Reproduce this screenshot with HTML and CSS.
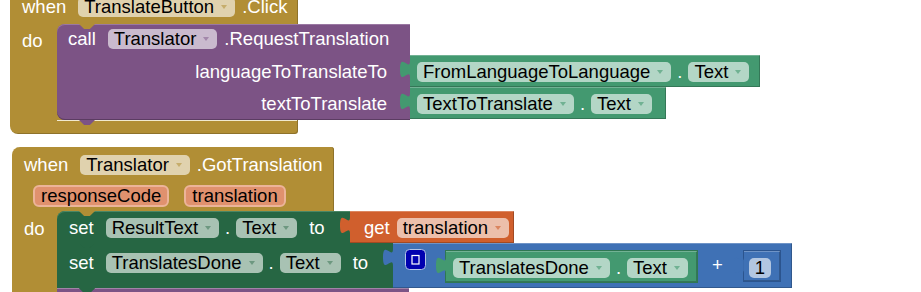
FILE: index.html
```html
<!DOCTYPE html>
<html lang="en">
<head>
    <meta charset="UTF-8">
    <title>Blocks</title>
    <link rel="stylesheet" href="styles.css">
</head>
<body>
    <div class="canvas">
        <!-- when TranslateButton.Click -->
        <div class="event ev1">
            <div class="ev-head">
                <div class="row">
                    <span class="label">when</span>
                    <span class="field dd">TranslateButton</span>
                    <span class="label method">.Click</span>
                </div>
            </div>
            <div class="ev-mid">
                <div class="ev-col"><span class="label">do</span></div>
                <div class="ev-stack">
                    <div class="stmt call">
                        <div class="line l1">
                            <div class="body">
                                <span class="label">call</span>
                                <span class="field dd">Translator</span>
                                <span class="label method">.RequestTranslation</span>
                            </div>
                        </div>
                        <div class="line l2">
                            <div class="body arg"><span class="label">languageToTranslateTo</span></div>
                            <div class="value getter g1">
                                <span class="field dd">FromLanguageToLanguage</span>
                                <span class="label dot">.</span>
                                <span class="field dd">Text</span>
                            </div>
                        </div>
                        <div class="line l3">
                            <div class="body arg"><span class="label">textToTranslate</span></div>
                            <div class="value getter g2">
                                <span class="field dd">TextToTranslate</span>
                                <span class="label dot">.</span>
                                <span class="field dd">Text</span>
                            </div>
                        </div>
                    </div>
                </div>
            </div>
            <div class="ev-foot"></div>
        </div>

        <!-- when Translator.GotTranslation -->
        <div class="event ev2">
            <div class="ev-head">
                <div class="row">
                    <span class="label">when</span>
                    <span class="field dd">Translator</span>
                    <span class="label method">.GotTranslation</span>
                </div>
                <div class="row params">
                    <span class="param">responseCode</span>
                    <span class="param">translation</span>
                </div>
            </div>
            <div class="ev-mid">
                <div class="ev-col"><span class="label">do</span></div>
                <div class="ev-stack">
                    <div class="stmt set s1">
                        <div class="line">
                            <div class="body">
                                <span class="label">set</span>
                                <span class="field dd">ResultText</span>
                                <span class="label dot">.</span>
                                <span class="field dd">Text</span>
                                <span class="label">to</span>
                            </div>
                            <div class="value var">
                                <span class="label get">get</span>
                                <span class="field dd">translation</span>
                            </div>
                        </div>
                    </div>
                    <div class="stmt set s2">
                        <div class="line">
                            <div class="body">
                                <span class="label">set</span>
                                <span class="field dd">TranslatesDone</span>
                                <span class="label dot">.</span>
                                <span class="field dd">Text</span>
                                <span class="label">to</span>
                            </div>
                            <div class="value math">
                                <svg class="mutator" width="21" height="21" viewBox="0 0 21 21">
                                    <rect x="0.5" y="0.5" width="20" height="20" rx="4" fill="#0000b0" stroke="#b3c4e8"/>
                                    <rect x="7" y="6.5" width="7" height="8.5" fill="none" stroke="#fff" stroke-width="1.2"/>
                                </svg>
                                <div class="value getter inner">
                                    <span class="field dd">TranslatesDone</span>
                                    <span class="label dot">.</span>
                                    <span class="field dd">Text</span>
                                </div>
                                <span class="label plus">+</span>
                                <div class="value number">
                                    <span class="field">1</span>
                                </div>
                            </div>
                        </div>
                    </div>
                    <div class="stmt call s3">
                        <div class="line">
                            <div class="body"></div>
                        </div>
                    </div>
                </div>
            </div>
        </div>
    </div>
</body>
</html>
```

FILE: styles.css
```css
html,body{
    margin:0px;
    padding:0px;
}
body{
    background:#fff;
    font-family:"Liberation Sans", Arial, sans-serif;
    font-size:18.5px;
}
.canvas{
    position:relative;
    width:921px;
    height:292px;
    overflow:hidden;
}

/* event blocks sit on the free canvas */
.event{
    position:absolute;
    display:flex;
    flex-direction:column;
    --gold:#b18e35;
}
.ev1{
    left:10px;
    top:-11px;
}
.ev2{
    left:12px;
    top:147px;
}
.ev-head{
    background:var(--gold);
    border-radius:8px 3px 0 0;
    box-shadow:inset -1px 0 0 #8e722a;
    --arrow:rgba(177,142,53,.55);
}
.ev1 .ev-head{ width:288px; }
.ev2 .ev-head{ width:322px; }
.row{
    display:flex;
    align-items:flex-start;
    gap:12px;
    height:34px;
    padding:8px 0 0 12px;
    box-sizing:border-box;
}
.ev1 .row{ height:35px; }
.row.params{
    height:30px;
    padding:4px 0 0 21px;
    gap:15px;
}
.ev-mid{
    display:flex;
}
.ev-col{
    background:var(--gold);
    box-sizing:border-box;
    padding:6px 0 0 12px;
}
.ev1 .ev-col{ width:47px; }
.ev2 .ev-col{ width:45px; padding-top:7px; }
.ev-stack{
    display:flex;
    flex-direction:column;
    background:linear-gradient(to right, var(--gold) 10px, transparent 10px);
}
.ev-foot{
    width:288px;
    height:14px;
    border-radius:0 0 3px 8px;
    background:linear-gradient(#f1e9cf, #f1e9cf) 47px 0 / 100% 1px no-repeat, var(--gold);
    box-shadow:inset -1px -1px 0 #8e722a;
}

/* text bits */
.label{
    color:#fff;
    line-height:20px;
    white-space:nowrap;
}
.method{ margin-left:-5px; }
.dot{ margin:0 -6px; }
.get{ margin-right:-5px; }
.field{
    display:inline-flex;
    align-items:center;
    height:20px;
    padding:0 6px;
    border-radius:5px;
    background:rgba(255,255,255,.6);
    color:#000;
    line-height:20px;
    white-space:nowrap;
}
.field.dd{
    padding-right:8px;
}
.field.dd::after{
    content:'';
    margin-left:7px;
    border-left:3px solid transparent;
    border-right:3px solid transparent;
    border-top:4px solid var(--arrow);
}
.param{
    box-sizing:border-box;
    height:22px;
    padding:0 6px;
    border:2px solid rgb(236,180,153);
    border-radius:6px;
    background:rgb(224,145,110);
    color:#000;
    line-height:18px;
    white-space:nowrap;
}

/* statement blocks */
.stmt{
    position:relative;
    display:flex;
    flex-direction:column;
}
.stmt::before,
.stmt::after{
    content:'';
    position:absolute;
    left:22px;
    width:16px;
    height:5px;
    z-index:2;
    clip-path:polygon(0 0, 100% 0, 68% 100%, 32% 100%);
}
.stmt::before{
    top:0;
    background:var(--up);
}
.stmt::after{
    top:100%;
    background:var(--c);
}
.call{
    --c:#7c5385;
    --arrow:rgba(124,83,133,.5);
    --up:#b18e35;
}
.set{
    --c:#266643;
    --arrow:rgba(38,102,67,.45);
    --up:#b18e35;
}
.s2,.s3{ --up:#266643; }
.line{
    display:flex;
}
.body{
    box-sizing:border-box;
    display:flex;
    align-items:flex-start;
    gap:12px;
    background:var(--c);
}
.call .body{
    width:353px;
    padding-left:11px;
}
.call .l1 .body{
    height:31px;
    padding-top:5px;
    border-top-left-radius:8px;
    box-shadow:inset 0 1px 0 #9a78a2;
}
.call .l2 .body{
    height:32px;
    padding-top:7px;
}
.call .l3 .body{
    height:33px;
    padding-top:7px;
    border-bottom-left-radius:8px;
    box-shadow:inset 0 -1px 0 #5b3c62;
}
.body.arg{
    justify-content:flex-end;
    padding-right:23px;
}
.s1 .body{
    width:293px;
    height:32px;
    padding:7px 0 0 12px;
    border-top-left-radius:8px;
    box-shadow:inset 0 1px 0 #4a8765;
}
.s2 .body{
    width:336px;
    height:45px;
    padding:10px 0 0 12px;
}
.s3 .body{
    width:352px;
    height:32px;
    box-shadow:inset 0 1px 0 #a184a8;
}

/* value blocks plug in from the right */
.value{
    position:relative;
    box-sizing:border-box;
    display:flex;
    align-items:flex-start;
    gap:12px;
    background:var(--c);
    box-shadow:inset 0 1px 0 rgba(255,255,255,.25), inset -1px -1px 0 rgba(0,0,0,.22);
}
.value::before{
    content:'';
    position:absolute;
    left:-10px;
    top:0;
    width:10px;
    height:23px;
    background:var(--c);
    clip-path:path('M10,0 V5.75 C10,17.25 0,-3.45 0,14.4 C0,32.2 10,11.5 10,23 Z');
}
.getter{
    --c:#439970;
    --arrow:rgba(67,153,112,.6);
    height:32px;
    padding:7px 0 0 7px;
}
.g1{ width:350px; }
.g2{ width:256px; }
.var{
    --c:#d05f2d;
    --arrow:rgba(208,95,45,.6);
    width:164px;
    height:32px;
    padding:7px 0 0 14px;
}
.math{
    --c:#3f71b5;
    width:399px;
    height:45px;
    padding:6px 0 0 12px;
    gap:0;
}
.math .inner{
    width:253px;
    height:33px;
    margin:1px 0 0 19px;
    padding:7px 0 0 7px;
    border:1px solid #2f7752;
}
.plus{
    margin:6px 0 0 14px;
}
.number{
    --c:#3f71b5;
    width:38px;
    height:32px;
    margin:1px 0 0 20px;
    padding:7px 0 0 5px;
    border:1px solid #2b548e;
}
```
